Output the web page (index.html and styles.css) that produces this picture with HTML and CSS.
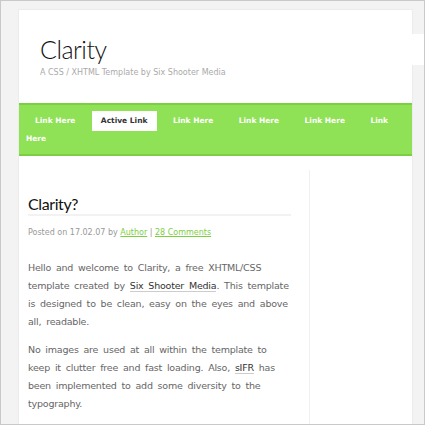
FILE: index.html
```html
<!DOCTYPE html>
<html lang="en">

<head>
    <meta charset="UTF-8">
    <meta name="viewport" content="width=device-width, initial-scale=1.0">
    <title>Clarity</title>
    <link rel="stylesheet" href="styles.css">
</head>

<body>
    <div class="frame">
        <div class="container">
            <div class="header">
                <h1 class="site-title">Clarity</h1>
                <p class="tagline">A CSS / XHTML Template by Six Shooter Media</p>
            </div>

            <ul class="nav">
                <li><a href="#">Link Here</a></li>
                <li><a href="#" class="active">Active Link</a></li>
                <li><a href="#">Link Here</a></li>
                <li><a href="#">Link Here</a></li>
                <li><a href="#">Link Here</a></li>
                <li><a href="#">Link Here</a></li>
            </ul>

            <div class="content">
                <div class="main">
                    <h2 class="post-title">Clarity?</h2>
                    <p class="post-meta">Posted on 17.02.07 by <a href="#">Author</a> | <a href="#">28 Comments</a></p>

                    <p>Hello and welcome to Clarity, a free XHTML/CSS template created by <a href="#">Six Shooter Media</a>. This template is designed to be clean, easy on the eyes and above all, readable.</p>

                    <p>No images are used at all within the template to keep it clutter free and fast loading. Also, <a href="#">sIFR</a> has been implemented to add some diversity to the typography.</p>
                </div>
                <div class="sidebar"></div>
            </div>
        </div>
    </div>
</body>

</html>
```

FILE: styles.css
```css
/* page frame */
body {
    margin: 0;
    padding: 0;
    font-family: "DejaVu Sans", Verdana, sans-serif;
}

.frame {
    width: 425px;
    height: 425px;
    box-sizing: border-box;
    border: 1px solid #c9c9c9;
    background-color: #f3f3f3;
    padding: 9px 0 0 18px;
    overflow: hidden;
}

.container {
    width: 393px;
    background-color: #fff;
    box-shadow: 0 0 0 1px #ececec;
    min-height: 600px;
}

/* header */
.header {
    box-sizing: border-box;
    padding: 24px 0 0 0;
    height: 93px;
}

.site-title {
    margin: 0 -12px 0 0;
    padding: 0 0 0 21px;
    height: 31px;
    background-color: #fff;
    font-family: Lato, "Open Sans", sans-serif;
    font-weight: 300;
    font-size: 25px;
    letter-spacing: -0.5px;
    line-height: 31px;
    color: #111;
}

.tagline {
    margin: 3px 0 0 21px;
    font-size: 8px;
    color: #aaa;
}

/* navigation */
.nav {
    list-style: none;
    margin: 0;
    padding: 7px 0 6px 7px;
    background-color: #8fe156;
    border-top: 2px solid #7ccf42;
    border-bottom: 2px solid #7ccf42;
    font-size: 7.5px;
    line-height: 18px;
}

.nav li {
    display: inline;
    margin-right: 5px;
}

.nav a {
    padding: 5px 9px 6px 9px;
    font-weight: bold;
    color: #fff;
    text-decoration: none;
}

.nav a.active {
    background-color: #fff;
    color: #333;
}

/* content columns */
.content {
    display: flex;
    padding-top: 14px;
}

.main {
    width: 263px;
    margin-left: 9px;
    padding-right: 18px;
    font-size: 9.5px;
    letter-spacing: -0.2px;
    word-spacing: 2px;
    line-height: 18px;
    color: #666;
}

.main a {
    color: #333;
    text-decoration: none;
    border-bottom: 1px solid #ccc;
}

.post-title {
    margin: 24px 0 0 0;
    border-bottom: 2px solid #f2f2f2;
    font-family: Lato, "Open Sans", sans-serif;
    font-weight: normal;
    font-size: 16px;
    letter-spacing: -0.4px;
    word-spacing: 0;
    line-height: 20px;
    color: #111;
}

.main .post-meta {
    margin: 8px 0 17px 0;
    font-size: 8px;
    letter-spacing: 0;
    word-spacing: 0;
    color: #999;
}

.post-meta a {
    color: #7ccf42;
    text-decoration: underline;
    border-bottom: none;
}

.main p {
    margin: 0 0 10px 0;
}

.sidebar {
    flex: 1;
    border-left: 1px solid #f0f0f0;
    min-height: 400px;
}
```
